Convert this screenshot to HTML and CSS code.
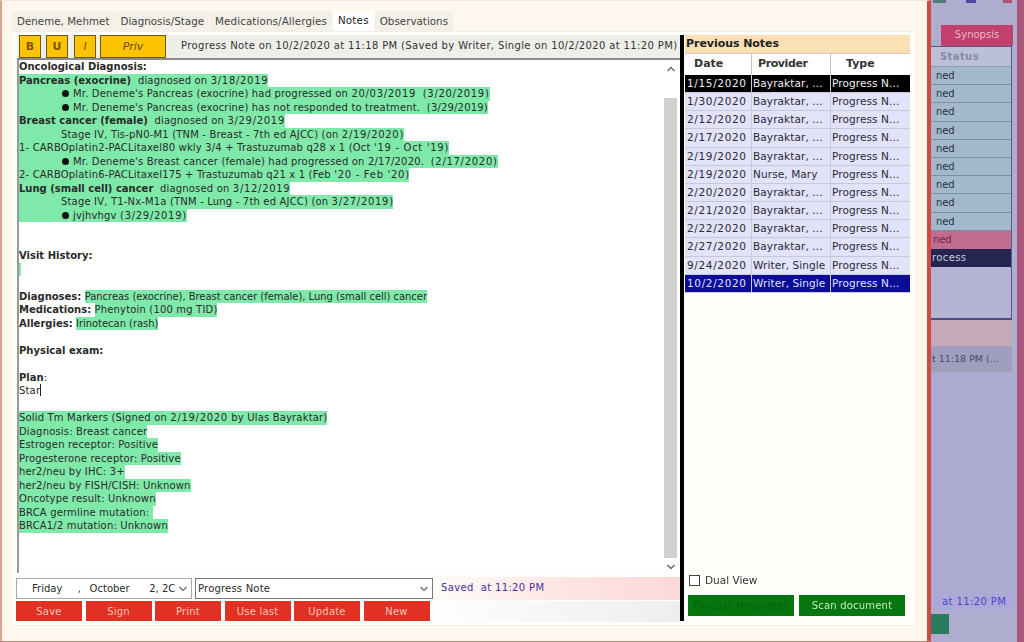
FILE: index.html
```html
<!DOCTYPE html>
<html lang="en">
<head>
<meta charset="utf-8">
<title>Notes</title>
<link rel="stylesheet" href="styles.css">
</head>
<body>
<main class="window">
  <nav class="tabs">
    <span class="tab">Deneme, Mehmet</span>
    <span class="tab">Diagnosis/Stage</span>
    <span class="tab wide">Medications/Allergies</span>
    <span class="tab active">Notes</span>
    <span class="tab">Observations</span>
  </nav>
  <section class="panel">
    <div class="left">
      <div class="toolbar">
        <button class="fmt bold">B</button>
        <button class="fmt under">U</button>
        <button class="fmt ital">I</button>
        <button class="fmt priv">Priv</button>
        <span class="note-title">Progress Note on 10/2/2020 at 11:18 PM (Saved by Writer, Single on 10/2/2020 at 11:20 PM)</span>
      </div>
      <div class="editor">
        <div class="doc">
          <div class="ln b">Oncological Diagnosis:</div>
          <div class="ln hl"><b>Pancreas (exocrine)</b>&nbsp; diagnosed on <span class="n">3/18/2019</span></div>
          <div class="ln hl"><span class="ind"><i class="dot"></i>Mr. Deneme's Pancreas (exocrine) had progressed on <span class="n">20/03/2019</span>&nbsp; <span class="n">(3/20/2019)</span></span></div>
          <div class="ln hl"><span class="ind"><i class="dot"></i>Mr. Deneme's Pancreas (exocrine) has not responded to treatment.&nbsp; (3/29/2019)</span></div>
          <div class="ln hl"><b>Breast cancer (female)</b>&nbsp; diagnosed on <span class="n">3/29/2019</span></div>
          <div class="ln hl"><span class="ind">Stage IV, Tis-pN0-M1 (TNM - Breast - 7th ed AJCC) (on <span class="n">2/19/2020</span>)</span></div>
          <div class="ln hl">1- CARBOplatin2-PACLitaxel80 wkly 3/4 + Trastuzumab q28 x 1 (Oct <span class="n">'19 - Oct '19</span>)</div>
          <div class="ln hl"><span class="ind"><i class="dot"></i>Mr. Deneme's Breast cancer (female) had progressed on 2/17/2020.&nbsp; <span class="n">(2/17/2020)</span></span></div>
          <div class="ln hl">2- CARBOplatin6-PACLitaxel175 + Trastuzumab q21 x 1 (Feb <span class="n">'20 - Feb '20</span>)</div>
          <div class="ln hl"><b>Lung (small cell) cancer</b>&nbsp; diagnosed on <span class="n">3/12/2019</span></div>
          <div class="ln hl"><span class="ind">Stage IV, T1-Nx-M1a (TNM - Lung - 7th ed AJCC) (on <span class="n">3/27/2019</span>)</span></div>
          <div class="ln hl"><span class="ind"><i class="dot"></i>jvjhvhgv <span class="n">(3/29/2019)</span></span></div>
          <div class="ln">&nbsp;</div>
          <div class="ln">&nbsp;</div>
          <div class="ln b">Visit History:</div>
          <div class="ln"><span class="mark-empty"></span></div>
          <div class="ln">&nbsp;</div>
          <div class="ln"><b>Diagnoses:</b> <span class="hl narrow">Pancreas (exocrine), Breast cancer (female), Lung (small cell) cancer</span></div>
          <div class="ln"><b>Medications:</b> <span class="hl">Phenytoin (100 mg TID)</span></div>
          <div class="ln"><b>Allergies:</b> <span class="hl narrow">Irinotecan (rash)</span></div>
          <div class="ln">&nbsp;</div>
          <div class="ln b">Physical exam:</div>
          <div class="ln">&nbsp;</div>
          <div class="ln"><b>Plan</b>:</div>
          <div class="ln">Star<span class="caret"></span></div>
          <div class="ln">&nbsp;</div>
          <div class="ln hl">Solid Tm Markers (Signed on <span class="n">2/19/2020</span> by Ulas Bayraktar)</div>
          <div class="ln hl">Diagnosis: Breast cancer</div>
          <div class="ln hl">Estrogen receptor: Positive</div>
          <div class="ln hl">Progesterone receptor: Positive</div>
          <div class="ln hl">her2/neu by IHC: 3+</div>
          <div class="ln hl">her2/neu by FISH/CISH: Unknown</div>
          <div class="ln hl">Oncotype result: Unknown</div>
          <div class="ln hl">BRCA germline mutation:&nbsp;</div>
          <div class="ln hl">BRCA1/2 mutation: Unknown</div>
        </div>
        <div class="scrollbar">
          <svg class="arrow" viewBox="0 0 10 6"><path d="M1.5 5 5 1.5 8.5 5" fill="none" stroke="#666" stroke-width="1.4"/></svg>
          <div class="track"></div>
          <svg class="arrow" viewBox="0 0 10 6"><path d="M1.5 1 5 4.5 8.5 1" fill="none" stroke="#666" stroke-width="1.4"/></svg>
        </div>
      </div>
      <div class="controls">
        <div class="select date"><span class="d1">Friday</span><span class="d2">,</span><span class="d3">October</span><span class="d4">2, 2C</span>
          <svg class="chev" viewBox="0 0 10 6"><path d="M1.5 1 5 4.5 8.5 1" fill="none" stroke="#666" stroke-width="1.2"/></svg></div>
        <div class="select type"><span>Progress Note</span>
          <svg class="chev" viewBox="0 0 10 6"><path d="M1.5 1 5 4.5 8.5 1" fill="none" stroke="#666" stroke-width="1.2"/></svg></div>
        <div class="saved">Saved&nbsp; at 11:20 PM</div>
      </div>
      <div class="actions">
        <button class="act">Save</button>
        <button class="act">Sign</button>
        <button class="act">Print</button>
        <button class="act">Use last</button>
        <button class="act">Update</button>
        <button class="act">New</button>
      </div>
    </div>
    <div class="divider"></div>
    <aside class="right">
      <h2 class="prev-head">Previous Notes</h2>
      <div class="grid head">
        <span>Date</span><span>Provider</span><span>Type</span>
      </div>
      <div class="grid row black"><span>1/15/2020</span><span>Bayraktar, ...</span><span>Progress N...</span></div>
      <div class="grid row"><span>1/30/2020</span><span>Bayraktar, ...</span><span>Progress N...</span></div>
      <div class="grid row"><span>2/12/2020</span><span>Bayraktar, ...</span><span>Progress N...</span></div>
      <div class="grid row"><span>2/17/2020</span><span>Bayraktar, ...</span><span>Progress N...</span></div>
      <div class="grid row"><span>2/19/2020</span><span>Bayraktar, ...</span><span>Progress N...</span></div>
      <div class="grid row"><span>2/19/2020</span><span>Nurse, Mary</span><span>Progress N...</span></div>
      <div class="grid row"><span>2/20/2020</span><span>Bayraktar, ...</span><span>Progress N...</span></div>
      <div class="grid row"><span>2/21/2020</span><span>Bayraktar, ...</span><span>Progress N...</span></div>
      <div class="grid row"><span>2/22/2020</span><span>Bayraktar, ...</span><span>Progress N...</span></div>
      <div class="grid row"><span>2/27/2020</span><span>Bayraktar, ...</span><span>Progress N...</span></div>
      <div class="grid row"><span>9/24/2020</span><span>Writer, Single</span><span>Progress N...</span></div>
      <div class="grid row navy"><span>10/2/2020</span><span>Writer, Single</span><span>Progress N...</span></div>
      <label class="dual"><span class="box"></span>Dual View</label>
      <div class="green-row">
        <button class="green dim">Discuss templates</button>
        <button class="green">Scan document</button>
      </div>
    </aside>
  </section>
</main>
<div class="side">
  <div class="side-main">
    <div class="side-top"><span class="frag f1"></span><span class="frag f2"></span><span class="frag f3"></span></div>
    <div class="syn">Synopsis</div>
    <div class="status">
      <div class="st-head">Status</div>
      <div class="st-row">ned</div>
      <div class="st-row">ned</div>
      <div class="st-row">ned</div>
      <div class="st-row">ned</div>
      <div class="st-row">ned</div>
      <div class="st-row">ned</div>
      <div class="st-row">ned</div>
      <div class="st-row">ned</div>
      <div class="st-row">ned</div>
      <div class="st-row pink">ned</div>
      <div class="st-row dark">rocess</div>
    </div>
    <div class="side-band"></div>
    <div class="side-title">t 11:18 PM (...</div>
    <div class="side-fill"></div>
    <div class="side-saved">at 11:20 PM</div>
    <div class="side-foot"><span class="square"></span></div>
  </div>
  <div class="side-strip"></div>
</div>
</body>
</html>
```

FILE: styles.css
```css
* { box-sizing: border-box; }
html, body { margin: 0; height: 100%; }
body {
  display: flex;
  width: 1024px;
  height: 642px;
  overflow: hidden;
  background: #aaa9cc;
  font-family: "DejaVu Sans", sans-serif;
  font-size: 10px;
  color: #2a2a2a;
  filter: blur(0.4px);
}
button { font-family: inherit; border: 0; padding: 0; }

/* main window */
.window {
  width: 931px;
  height: 642px;
  flex: none;
  padding: 10px 12px 15px 10px;
  background: #fdf7ee;
  border-top: 1px solid #fbe3dc;
  border-left: 2px solid #d9a08c;
  border-right: 4px solid #d2493f;
  border-bottom: 1px solid #b98a80;
  display: flex;
  flex-direction: column;
}
.tabs { display: flex; gap: 1px; height: 20px; flex: none; }
.tab {
  padding: 0 5px;
  line-height: 20px;
  background: #f3f0e8;
  color: #444;
  white-space: nowrap;
  font-size: 10.3px;
  letter-spacing: .02px;
}
.tab.wide { letter-spacing: .12px; }
.tab.active { background: #fff; color: #222; line-height: 18px; letter-spacing: .2px; }

.panel {
  flex: 1;
  display: flex;
  min-height: 0;
  background: #fefefb;
  padding: 3px 5px 4px 5px;
  border-top: 1px solid #eee;
  border-bottom: 1px solid #eee;
}

/* left column */
.left { width: 663px; flex: none; display: flex; flex-direction: column; }
.toolbar {
  height: 25px;
  flex: none;
  display: flex;
  align-items: flex-start;
  background: #eeeeea;
  border-bottom: 2px solid #8a8a8a;
}
.fmt {
  height: 23px;
  background: #fbc300;
  border: 1px solid #6b5a10;
  color: #7d5300;
  font-size: 11px;
  font-weight: 700;
}
.bold { width: 22px; margin-left: 2px; }
.under { width: 22px; margin-left: 5px; }
.ital { width: 22px; margin-left: 6px; font-style: italic; font-weight: 400; }
.priv { width: 66px; margin-left: 4px; font-style: italic; font-weight: 400; color: #6b4a00; }
.note-title { margin-left: 15px; line-height: 22px; white-space: nowrap; color: #333; letter-spacing: .365px; font-size: 10px; }

.editor { height: 513px; flex: none; display: flex; background: #fff; border-left: 2px solid #999; }
.doc { flex: 1; min-width: 0; }
.ln { height: 13.5px; line-height: 13.5px; white-space: nowrap; width: fit-content; letter-spacing: .17px; }
.b, .ln b { font-weight: 700; letter-spacing: 0; }
.n { letter-spacing: .7px; }
.hl { background: #7fe9a9; }
span.hl { display: inline-block; height: 13.5px; }
span.narrow { letter-spacing: -.04px; }
.ind { display: block; padding-left: 42px; }
.dot { display: inline-block; width: 7px; height: 7px; margin: 0 4px 0 1px; border-radius: 50%; background: #111; }
.mark-empty { display: block; width: 2px; height: 13.5px; background: #7fe9a9; }
.caret { display: inline-block; width: 1px; height: 12px; background: #222; vertical-align: -2px; }

.scrollbar { width: 15px; flex: none; display: flex; flex-direction: column; align-items: center; margin-right: 2px; }
.arrow { width: 10px; height: 6px; flex: none; margin: 6px 0; }
.arrow:last-child { margin: 6px 0 3px; }
.track { flex: 1; width: 13px; background: #d0d0cd; margin-top: 20px; }

.controls { display: flex; height: 23px; flex: none; margin-top: 4px; align-items: center; }
.select {
  height: 21px;
  display: flex;
  align-items: center;
  background: #fff;
  border: 1px solid #aaa;
  white-space: nowrap;
  font-size: 10px;
}
.date { width: 176px; flex: none; margin-left: -1px; }
.d1 { margin-left: 15px; width: 46px; }
.d2 { width: 12px; }
.d3 { width: 60px; }
.d4 { width: 29px; }
.type { width: 238px; flex: none; margin-left: 3px; padding-left: 2px; justify-content: space-between; border-color: #777; letter-spacing: .2px; }
.chev { width: 10px; height: 6px; flex: none; margin-right: 3px; }
.saved {
  flex: 1;
  margin-left: 6px;
  height: 23px;
  line-height: 22px;
  padding-left: 2px;
  color: #4b2f9a;
  background: linear-gradient(90deg, #fffafa, #fde4e1 55%, #fdd9d9);
  letter-spacing: .35px;
}
.actions { display: flex; gap: 3.5px; flex: none; height: 21px; margin-top: 1px; margin-left: -1px; background: linear-gradient(90deg, #fff 60%, #eee); }
.act { width: 66px; height: 20px; background: #e03222; color: #f6c4b8; font-size: 10px; letter-spacing: .2px; }

/* divider */
.divider { width: 4px; flex: none; background: #000; margin-right: 1px; }

/* right column */
.right { width: 225px; flex: none; display: flex; flex-direction: column; }
.prev-head { margin: 0; height: 19px; line-height: 18px; background: #fbdfb5; font-size: 11px; font-weight: 700; padding-left: 1px; color: #222; border-bottom: 1px solid #cfcfc8; letter-spacing: -.05px; }
.grid { display: grid; grid-template-columns: 66px 79px 79px; }
.head { height: 21px; line-height: 20px; font-weight: 700; font-size: 11px; background: #fff; color: #333; }
.head span:nth-child(1) { padding-left: 9px; }
.head span:nth-child(2) { padding-left: 6px; border-left: 1px solid #c4c4c4; letter-spacing: -.4px; }
.head span:nth-child(3) { padding-left: 15px; border-left: 1px solid #c4c4c4; }
.row { height: 18.17px; line-height: 17px; background: #e2e2f8; color: #2a2a3a; font-size: 10.5px; border-bottom: 1px solid #c8c8d8; letter-spacing: .1px; }
.row span { padding-left: 1px; white-space: nowrap; overflow: hidden; }
.row span + span { border-left: 1px solid #c8c8d8; }
.row span:first-child { padding-left: 2px; letter-spacing: .65px; }
.black { background: #000; color: #eee; }
.navy { background: #0c0c96; color: #dfe3ff; }
.dual { margin-top: auto; display: flex; align-items: center; margin-left: 4px; height: 14px; color: #333; font-size: 10.5px; }
.box { width: 11px; height: 11px; border: 1px solid #444; background: #fff; margin-right: 5px; }
.green-row { display: flex; gap: 5px; margin: 8px 0 5px 3px; }
.green { width: 106px; height: 21px; background: #06770e; color: #c2ecc4; font-size: 10px; letter-spacing: .2px; }
.dim { color: #0b5c10; }

/* window behind */
.side { flex: 1; display: flex; min-width: 0; }
.side-main { width: 86px; flex: none; display: flex; flex-direction: column; background: #aeadcf; overflow: hidden; }
.side-strip { flex: 1; background: #a9567b; }
.side-top { display: flex; height: 3px; flex: none; }
.frag { display: block; height: 3px; }
.f1 { width: 13px; margin-left: 2px; background: #4f7c78; }
.f2 { width: 10px; margin-left: 20px; background: #4a48a0; }
.f3 { width: 9px; margin-left: 27px; background: #b0506e; }
.syn { width: 72px; height: 21px; flex: none; margin: 22px 0 0 10px; background: #c2406e; color: #e8b8c8; text-align: center; line-height: 20px; }
.status { width: 81px; height: 274px; flex: none; background: #b4b3d4; border-top: 1px solid #5a5a8a; border-right: 1px solid #5a5a8a; border-bottom: 2px solid #4c4c78; }
.st-head { height: 20px; line-height: 20px; padding-left: 9px; color: #8888a6; font-weight: 700; background: #bcc0d6; border-bottom: 1px solid #8a9ab2; letter-spacing: .4px; }
.st-row { height: 18.2px; line-height: 17px; padding-left: 5px; background: #a4b8cc; border-bottom: 1px solid #7d8fa6; color: #27304a; white-space: nowrap; overflow: hidden; font-size: 10px; letter-spacing: -.1px; }
.st-row.pink { background: #c26c8e; border-bottom: 0; color: #6b2b4a; padding-left: 2px; }
.st-row.dark { background: #24264f; color: #c7cbe0; border-bottom: 0; padding-left: 1px; letter-spacing: .4px; }
.side-band { width: 81px; height: 26px; flex: none; background: #c4a9b6; }
.side-title { width: 81px; height: 26px; flex: none; line-height: 26px; padding-left: 1px; background: #9f9fbd; color: #4a4a68; white-space: nowrap; overflow: hidden; font-size: 9.5px; }
.side-fill { flex: 1; background: #abaad0; width: 81px; }
.side-saved { width: 81px; height: 16px; flex: none; line-height: 16px; padding-left: 11px; color: #4a44c8; background: #aca9d8; white-space: nowrap; font-size: 10px; letter-spacing: .4px; }
.side-foot { height: 32px; flex: none; padding-top: 4px; }
.square { display: block; width: 18px; height: 20px; background: #2b7c5e; }
```
